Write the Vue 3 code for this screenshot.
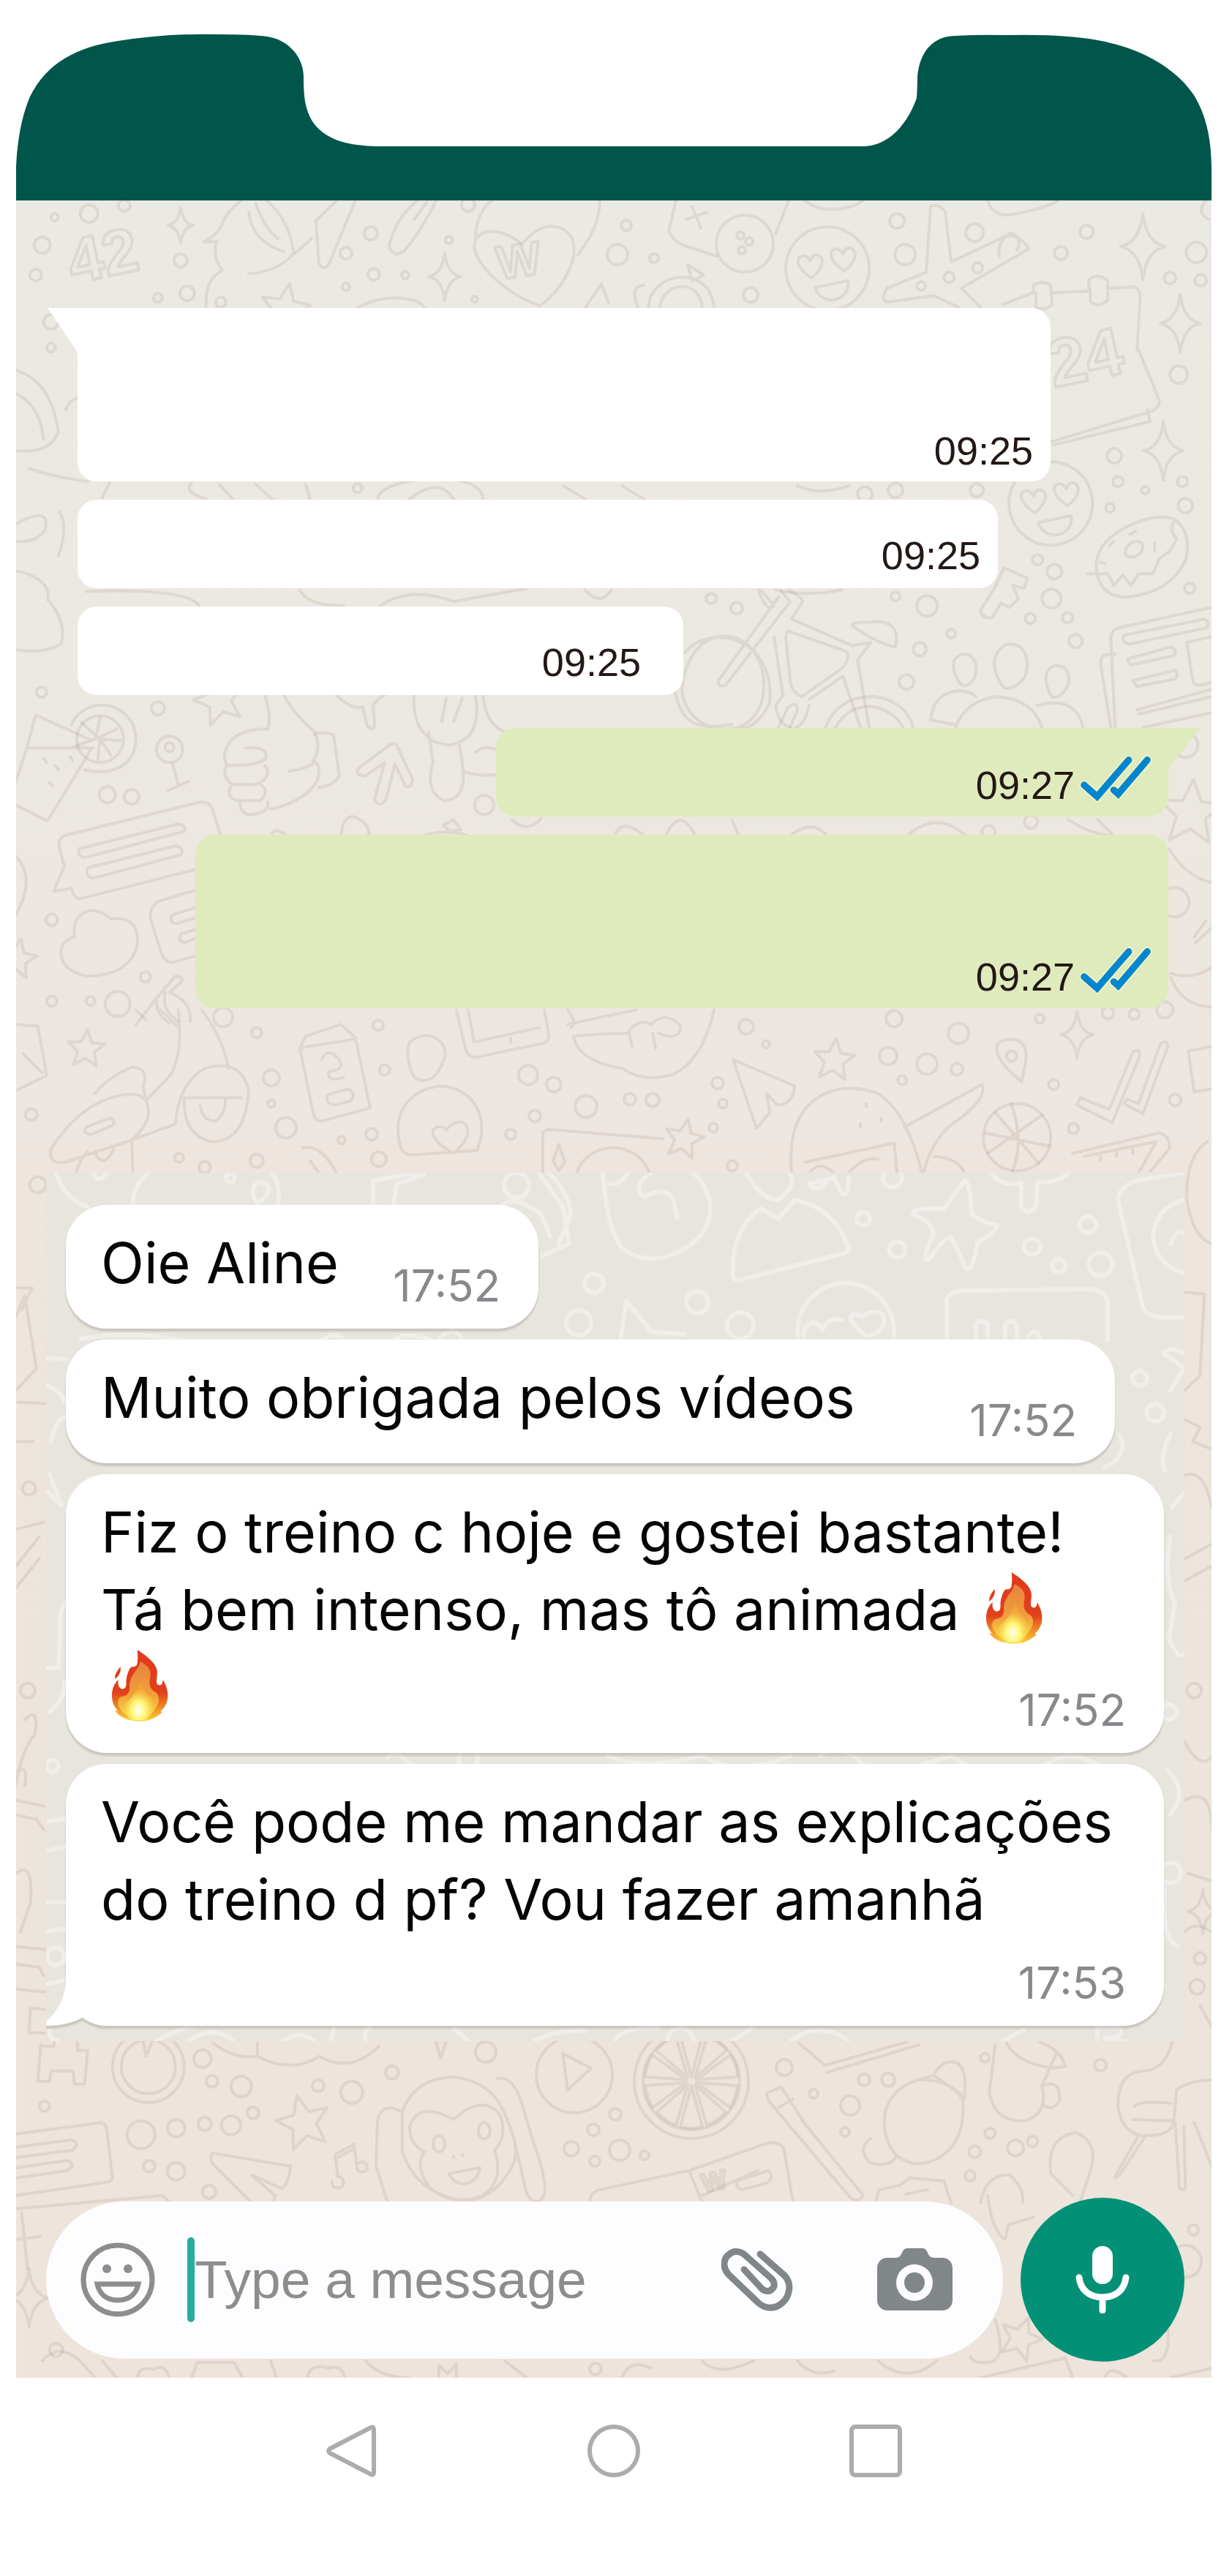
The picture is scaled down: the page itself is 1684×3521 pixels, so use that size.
<template>
  <main class="screen">
    <svg class="status-shape" viewBox="22 0 1634 274" aria-hidden="true">
      <path d="M22 274C20 222 24 172 41 132C64 86 105 64 161 56Q232 45 301 47Q345 47 365 50C395 54 415 79 415 105C415 129 416 151 430 170C446 190 472 199 516 200H1181C1216 199 1241 168 1253 134Q1254 120 1254 105C1256 78 1270 50 1305 49Q1340 47 1375 48Q1426 47 1461 50C1547 56 1604 89 1632 130C1650 160 1656 193 1656 232V274Z" />
    </svg>

    <section class="chat">
      <!-- wallpaper doodles -->
      <svg class="doodles" viewBox="22 274 1634 2975" preserveAspectRatio="xMidYMin slice" aria-hidden="true">
        <circle v-for="(c, i) in dots" :key="'c' + i" :cx="c[0]" :cy="c[1]" :r="c[2]" />
        <path v-for="(d, i) in doodles" :key="'d' + i" :d="d" />
        <path v-for="(s, i) in stars" :key="'s' + i" :d="starPath" :transform="`translate(${s[0]} ${s[1]}) rotate(${s[3]}) scale(${s[2]})`" vector-effect="non-scaling-stroke" />
        <path v-for="(s, i) in sparkles" :key="'p' + i" :d="sparklePath" :transform="`translate(${s[0]} ${s[1]}) scale(${s[2]})`" vector-effect="non-scaling-stroke" />
        <g v-for="(f, i) in faces" :key="'f' + i" :transform="`translate(${f[0]} ${f[1]}) rotate(-12)`">
          <circle r="57" />
          <path d="M-24 8C-42-10-40-24-30-24C-24-24-22-18-21-15C-18-20-14-24-8-20C0-12-8 0-24 8ZM22 8C4-10 6-24 16-24C22-24 24-18 25-15C28-20 32-24 38-20C46-12 38 0 22 8ZM-22 22H24C22 50-18 52-22 22Z" />
        </g>
        <text x="100" y="388" font-size="86" transform="rotate(-12 100 388)">42</text>
        <text x="1440" y="530" font-size="92" transform="rotate(-12 1440 530)">24</text>
        <text x="682" y="382" font-size="64" transform="rotate(-8 682 382)">W</text>
        <text x="962" y="2996" font-size="36" transform="rotate(-12 962 2996)">W</text>
      </svg>

      <ol class="thread">
        <li
          v-for="m in cleared"
          :key="m.id"
          :class="['blank', m.kind, { tall: m.tall, tail: m.tail, inset: m.inset }]"
          :style="{ width: m.width + 'px' }"
        >
          <time>{{ m.time }}</time>
          <svg v-if="m.kind === 'sent'" class="ticks" viewBox="536 160 280 186" role="img" aria-label="Read">
            <path class="halo" d="M550 282L602 328L728 182M668 302L686 318L802 182" />
            <path d="M550 282L602 328L728 182M668 302L686 318L802 182" />
          </svg>
        </li>
      </ol>

      <div class="recent">
        <svg class="doodles light" viewBox="63 1603 1556 1187" preserveAspectRatio="xMidYMin slice" aria-hidden="true">
          <circle v-for="(c, i) in lightDots" :key="'c' + i" :cx="c[0]" :cy="c[1]" :r="c[2]" />
          <path v-for="(d, i) in lightDoodles" :key="'d' + i" :d="d" />
        </svg>
        <ol class="bubbles">
          <li v-for="m in messages" :key="m.id" :class="['bubble', { last: m.last }]" :style="{ width: m.width + 'px' }">
            <p>
              <span v-for="(line, i) in m.lines" :key="i" class="line">{{ line.text }}
                <svg v-if="line.fire" class="fire" viewBox="52 58 236 300" role="img" aria-label="🔥">
                  <defs>
                    <linearGradient id="fire-outer" x1="0" y1="0" x2="0" y2="1">
                      <stop offset="0" stop-color="#e2391c" />
                      <stop offset="0.6" stop-color="#e0401c" />
                      <stop offset="0.85" stop-color="#f39a26" />
                      <stop offset="1" stop-color="#fbd53c" />
                    </linearGradient>
                    <linearGradient id="fire-middle" x1="0" y1="0" x2="0" y2="1">
                      <stop offset="0" stop-color="#e9803f" />
                      <stop offset="0.6" stop-color="#f0a23a" />
                      <stop offset="1" stop-color="#fbe24a" />
                    </linearGradient>
                    <radialGradient id="fire-core" cx="0.5" cy="0.75" r="0.55">
                      <stop offset="0" stop-color="#fffff0" />
                      <stop offset="0.45" stop-color="#fff679" />
                      <stop offset="1" stop-color="#f8cf3a" stop-opacity="0.2" />
                    </radialGradient>
                  </defs>
                  <path fill="url(#fire-outer)" d="M160 60C205 90 240 118 242 150C243 175 236 190 242 202C252 210 266 208 265 184C277 200 286 225 286 250C286 280 272 300 256 314L262 318C250 332 226 346 205 352Q170 358 138 352C110 348 82 334 68 310L82 314C64 298 54 272 55 246C56 220 65 198 82 184C78 202 84 220 98 222C116 220 114 206 114 188C116 164 126 136 136 130C148 132 160 128 160 112C163 94 162 76 160 60ZM91 130C92 152 84 170 67 180C68 160 76 144 91 130Z" />
                  <path fill="url(#fire-middle)" d="M172 108C208 126 220 146 212 178C208 206 212 222 236 236C252 246 254 276 236 300C220 330 190 346 166 346C128 344 92 322 82 290C76 268 84 254 100 252C124 248 130 232 128 206C128 176 148 154 160 138Q170 126 172 108Z" />
                  <path fill="url(#fire-core)" d="M178 190C184 226 206 240 222 262C232 290 224 330 196 350H140C108 334 96 306 110 280C138 264 156 228 178 190Z" />
                </svg>
              </span>
            </p>
            <time>{{ m.time }}</time>
            <svg v-if="m.last" class="bubble-tail" viewBox="0 0 60 69" aria-hidden="true">
              <path d="M27 0C27 30 17 48 0 63V69C20 69 36 65 49 58L60 0Z" />
            </svg>
          </li>
        </ol>
      </div>

      <form class="composer" @submit.prevent>
        <div class="field">
          <button type="button" class="emoji" aria-label="Emoji">
            <svg viewBox="0 0 102 102">
              <circle cx="51" cy="51" r="47" fill="none" stroke="#8e8d8d" stroke-width="7" />
              <circle cx="36" cy="36" r="6" fill="#8e8d8d" />
              <circle cx="65" cy="36" r="6" fill="#8e8d8d" />
              <path d="M23 57H79C76 71 66 79 51 79C36 79 26 71 23 57Z" fill="none" stroke="#8e8d8d" stroke-width="7" />
            </svg>
          </button>
          <span class="caret"></span>
          <input v-model="draft" type="text" placeholder="Type a message" aria-label="Type a message" />
          <button type="button" class="clip" aria-label="Attach">
            <svg viewBox="0 0 98 86">
              <path d="M53 8L86 37C98 49 92 67 84 74C74 84 60 83 51 75L10 36C1 26 3 14 10 9C17 2 27 4 33 10L68 41C74 47 73 53 69 56C65 60 59 59 55 55L31 29" fill="none" stroke="#818688" stroke-width="9" stroke-linecap="round" stroke-linejoin="round" />
            </svg>
          </button>
          <button type="button" class="camera" aria-label="Camera">
            <svg viewBox="0 0 103 86">
              <path fill="#818688" fill-rule="evenodd" d="M14 13H26C36 12 32 0 42 0H61C71 0 67 12 77 13H89C97 13 103 19 103 27V71C103 79 97 85 89 85H14C6 85 0 79 0 71V27C0 19 6 13 14 13ZM51 22A25 25 0 1 0 51 72A25 25 0 1 0 51 22ZM51 33A14 14 0 1 1 51 61A14 14 0 1 1 51 33Z" />
            </svg>
          </button>
        </div>
        <button type="button" class="mic" aria-label="Voice message">
          <svg viewBox="0 0 74 92">
            <rect x="23" y="0" width="28" height="52" rx="14" fill="#fff" />
            <path d="M5 43C7 60 19 70 37 70C55 70 67 60 69 43M37 70V88" fill="none" stroke="#fff" stroke-width="9" stroke-linecap="round" />
          </svg>
        </button>
      </form>
    </section>

    <nav class="system-nav">
      <button type="button" aria-label="Back">
        <svg viewBox="0 0 72 72"><path d="M62 4Q66 2 66 7V65Q66 70 62 68L6 39Q2 36 6 33Z" /></svg>
      </button>
      <button type="button" aria-label="Home">
        <svg viewBox="0 0 72 72"><circle cx="36" cy="36" r="33" /></svg>
      </button>
      <button type="button" aria-label="Recent apps">
        <svg viewBox="0 0 72 72"><rect x="3" y="3" width="66" height="66" rx="5" /></svg>
      </button>
    </nav>
  </main>
</template>

<script setup>
import { ref } from 'vue'

const draft = ref('')

const cleared = [
  { id: 1, kind: 'received', time: '09:25', width: 1330, tall: true, tail: true },
  { id: 2, kind: 'received', time: '09:25', width: 1258 },
  { id: 3, kind: 'received', time: '09:25', width: 828, inset: true },
  { id: 4, kind: 'sent', time: '09:27', width: 919, tail: true },
  { id: 5, kind: 'sent', time: '09:27', width: 1330, tall: true }
]

const messages = [
  { id: 6, time: '17:52', width: 646, lines: [{ text: 'Oie Aline' }] },
  { id: 7, time: '17:52', width: 1434, lines: [{ text: 'Muito obrigada pelos vídeos' }] },
  {
    id: 8,
    time: '17:52',
    width: 1501,
    lines: [
      { text: 'Fiz o treino c hoje e gostei bastante!' },
      { text: 'Tá bem intenso, mas tô animada', fire: true },
      { text: '', fire: true }
    ]
  },
  {
    id: 9,
    time: '17:53',
    width: 1501,
    last: true,
    lines: [{ text: 'Você pode me mandar as explicações' }, { text: 'do treino d pf? Vou fazer amanhã' }]
  }
]

const starPath = 'M0-50L14-17L48-15L22 8L30 44L0 25L-30 44L-22 8L-48-15L-14-17Z'
const sparklePath = 'M0-50Q5-6 34 0Q5 6 0 50Q-5 6-34 0Q-5-6 0-50Z'

// x, y, scale, rotation
const stars = [
  [390, 422, 0.7, 10], [300, 958, 0.7, 200], [118, 1433, 0.52, 4], [1140, 1448, 0.58, 6], [935, 1556, 0.55, 12],
  [1628, 1110, 0.9, 4], [415, 2900, 0.75, -14], [24, 1310, 0.55, 10], [1395, 3195, 0.6, 20]
]
const sparkles = [
  [247, 308, 0.5], [608, 378, 0.65], [1562, 337, 0.9], [1613, 442, 0.8], [1590, 616, 0.8], [1472, 1414, 0.65], [40, 3140, 0.8], [1644, 2612, 0.6]
]
const faces = [[1131, 367], [1436, 688]]

const dots = [
  [122, 292, 12], [170, 281, 8], [75, 297, 5], [58, 335, 11], [49, 376, 8], [507, 319, 9], [473, 346, 8], [511, 375, 8],
  [554, 376, 5], [614, 328, 5], [640, 280, 9], [247, 356, 9], [256, 401, 10], [216, 407, 6], [302, 413, 7], [473, 392, 5],
  [649, 409, 4], [856, 308, 7], [844, 348, 14], [894, 353, 6], [1018, 333, 39], [1012, 322, 5], [1024, 330, 5], [1014, 342, 5],
  [1026, 403, 10], [1226, 302, 10], [1332, 318, 12], [1237, 348, 14], [1297, 379, 7], [1336, 366, 7], [1485, 317, 9],
  [1450, 346, 9], [1635, 345, 14], [1599, 380, 8], [1641, 383, 8], [1259, 391, 6], [70, 475, 6], [70, 440, 10],
  [1611, 512, 12], [1523, 623, 10], [1565, 670, 5], [1528, 658, 7], [1616, 658, 7], [1335, 670, 9], [1224, 670, 10],
  [1182, 675, 10], [489, 667, 6], [57, 946, 7], [216, 968, 9], [232, 1024, 18], [232, 1021, 6], [147, 1086, 11],
  [180, 1089, 10], [662, 1100, 13], [71, 1257, 8], [71, 1368, 7], [124, 1368, 6], [161, 1372, 17], [199, 1335, 7],
  [305, 1390, 13], [972, 818, 7], [1007, 831, 8], [1267, 828, 14], [1224, 815, 6], [1300, 866, 6], [1257, 887, 9],
  [1239, 932, 10], [1418, 765, 7], [1441, 781, 10], [1437, 818, 13], [1408, 845, 7], [1459, 844, 7], [1470, 876, 9],
  [1626, 804, 7], [1620, 691, 10], [1517, 694, 6], [1605, 1233, 20], [1592, 1380, 11], [1550, 1386, 7], [1514, 1384, 8],
  [1620, 1018, 17], [1409, 1123, 9], [1351, 1137, 9], [351, 1411, 7], [517, 1401, 7], [526, 1462, 7],
  [371, 1473, 11], [371, 1508, 5], [391, 1541, 14], [467, 1558, 5], [508, 1550, 8], [518, 1584, 10], [351, 1586, 9],
  [245, 1582, 6], [280, 1595, 8], [43, 1523, 8], [722, 1469, 13], [757, 1482, 10], [801, 1512, 15], [861, 1502, 8],
  [892, 1503, 9], [731, 1525, 8], [698, 1550, 7], [981, 1480, 8], [988, 1508, 6], [975, 1541, 6], [1020, 1403, 10],
  [1047, 1427, 5], [1214, 1443, 12], [1267, 1454, 14], [1308, 1461, 8], [1233, 1476, 6], [1222, 1392, 11], [1310, 1412, 14],
  [1421, 1392, 6], [1440, 1482, 7], [1467, 1542, 7], [1606, 1503, 8], [1001, 1593, 7], [52, 1619, 11], [1390, 1554, 46],
  [277, 2813, 12], [290, 2844, 8], [330, 2851, 14], [435, 2850, 8], [481, 2859, 15], [536, 2832, 9], [664, 2804, 14],
  [61, 2878, 7], [193, 2917, 19], [241, 2908, 12], [280, 2902, 9], [316, 2904, 13], [346, 2887, 8], [204, 2960, 8],
  [241, 2967, 12], [286, 2995, 9], [841, 2889, 8], [811, 2910, 8], [781, 2936, 10], [847, 2938, 14], [813, 2953, 7],
  [881, 2945, 6], [1072, 2825, 11], [1162, 2877, 13], [1181, 2842, 8], [1214, 2842, 9], [1112, 2861, 6], [1155, 2913, 6],
  [1346, 2812, 6], [1504, 2822, 8], [1353, 2915, 7], [1332, 2940, 8], [1388, 2935, 11], [1411, 2926, 7], [1326, 2973, 7],
  [1631, 3047, 7], [77, 3211, 9], [814, 3237, 8], [945, 2844, 78], [945, 2844, 66], [785, 2835, 52], [203, 2824, 49],
  [203, 2824, 37], [137, 1010, 32], [1620, 3090, 22], [40, 2034, 9], [38, 2310, 10], [1632, 2310, 10], [1636, 2715, 10], [1640, 2676, 8]
]

const doodles = [
  // parrot, paper planes, hearts along the top
  'M282 420Q280 380 304 370Q290 350 296 330Q276 332 280 330Q302 318 306 300Q318 282 330 274M365 274Q395 300 402 346Q380 372 340 374M340 290Q345 330 388 344M350 278Q360 310 380 326',
  'M460 274L432 302L436 360Q444 372 450 360L486 274M404 346L426 326M570 274Q540 300 532 336Q536 352 552 344Q580 310 596 274M566 300L584 276M576 310L592 284',
  'M738 418C680 396 640 350 650 328C662 308 692 316 714 334C732 306 768 300 782 326C794 356 764 400 738 418ZM650 328Q650 292 672 274M820 274Q820 310 790 348',
  'M924 274L914 316Q920 330 936 336L980 350M1078 274L1060 320M1100 274C1120 292 1160 288 1180 274M1350 274Q1358 300 1390 292Q1430 284 1446 274M938 300L966 290M946 282L958 312',
  'M1266 372L1272 282Q1284 278 1292 290L1300 358L1376 322Q1396 322 1406 340L1314 394L1340 420M1266 372L1212 394Q1200 416 1220 412L1276 404L1310 420M1366 350Q1362 330 1382 318Q1398 324 1390 342',
  'M1370 416L1412 400L1412 390Q1424 382 1436 390L1438 416Q1428 426 1416 420V400M1438 400L1488 398V382Q1502 372 1514 384V410Q1502 422 1490 412V394M1514 394L1550 392Q1560 396 1558 410L1554 478M1556 478L1584 546Q1586 556 1574 562L1436 604M1568 560L1572 576L1440 608',
  'M800 420L822 388L832 414M872 420Q860 390 880 390M886 420C890 370 970 360 976 420M902 420C906 384 956 380 960 420M940 362L962 376L946 384ZM490 420Q520 404 550 408Q574 410 580 420M1648 274Q1634 290 1652 300',
  // left edge between bubbles
  'M22 506Q70 520 80 590Q70 620 22 616M22 538Q54 552 60 600M40 640Q66 650 120 658M22 716Q70 690 62 724Q50 742 22 740M22 780Q70 790 66 820Q92 850 84 880Q60 894 22 888M90 560Q96 546 106 544M82 700Q94 720 80 760',
  'M150 660L140 680M262 660Q250 672 282 682M300 662L318 682M350 662L372 682M418 662L424 682M516 682C520 650 660 640 660 682M560 682Q600 650 620 682M770 664L800 682M850 664L880 682M1090 664Q1120 678 1160 664',
  'M118 808Q260 804 272 828M410 806Q420 828 470 828M520 828Q560 800 620 822L720 804M800 806Q820 830 836 806M1060 806Q1100 816 1150 806',
  // cocktail, thumb up and arrow
  'M49 977L124 1011L98 1022H37ZM37 1022L22 1068M98 1022L130 1010M126 1022L65 1122L22 1100M98 1022H128M137 980L131 1010L160 996M137 1010L165 1012M137 1010L152 1032M137 1010L134 1038M137 1010L112 988',
  'M98 990C110 960 160 950 182 990C196 1030 170 1064 116 1052M236 1044L244 1072M230 1080L258 1068M60 1036L64 1042M76 1046L80 1052M96 1034L100 1040M68 1070L72 1074',
  'M362 950Q372 980 366 996Q330 996 316 1012Q302 1030 310 1046Q366 1046 364 1032Q364 1020 336 1022M310 1046Q302 1062 318 1072H350Q374 1062 362 1046M318 1072Q306 1088 324 1094H356Q370 1080 356 1072M328 1094Q328 1118 350 1112Q370 1108 366 1096M370 1106Q420 1094 434 1066Q440 1044 428 1040Q440 1022 430 1000Q400 974 388 950M396 1054Q420 1050 430 1042',
  'M430 1004Q436 998 456 1004L464 1060Q456 1074 436 1076M490 1050Q484 1060 500 1060L526 1042L512 1092Q518 1106 528 1092L540 1044L554 1074Q564 1078 564 1064L542 1018Q536 1014 530 1020Z',
  'M460 950Q480 970 496 966L502 992Q512 1002 512 988L510 964Q518 952 526 950M566 950Q564 990 584 1006Q590 1016 616 1018Q660 1010 650 950M586 1000L592 1042Q580 1080 606 1094Q640 1094 632 1042L628 1018M604 986L610 954M620 986L632 954M660 950Q664 990 690 1000M632 1054Q660 1062 678 1058M650 1028Q660 1018 678 1024',
  // speech bubbles and cloud
  'M88 1142L274 1096Q286 1096 290 1104L302 1142M88 1142Q78 1148 82 1160L88 1184L74 1218L98 1214Q102 1230 110 1228L268 1188M108 1160L244 1126Q256 1128 252 1136L116 1172Q106 1170 108 1160ZM120 1186L240 1156Q252 1158 248 1168L128 1200Q116 1198 120 1186Z',
  'M268 1216L216 1232Q204 1240 206 1256L222 1306Q230 1318 240 1314L268 1306M268 1240L236 1250Q230 1262 242 1262L268 1254M268 1270L248 1276Q242 1286 252 1288L268 1282',
  'M102 1280Q98 1250 124 1244Q140 1244 152 1256Q190 1250 188 1290Q180 1332 120 1334Q80 1326 84 1296Q88 1284 102 1280ZM22 1170Q50 1200 22 1250M370 1142Q376 1128 392 1142M466 1142Q470 1106 492 1120Q506 1128 504 1142M606 1128L620 1120L630 1134L616 1136ZM580 1142Q610 1132 640 1142',
  'M186 1400L214 1364L240 1334Q252 1334 248 1342L232 1356Q264 1370 260 1396M214 1364Q212 1386 232 1398M226 1356Q220 1380 244 1396',
  // doughnut and key
  'M1498 772Q1500 740 1540 720Q1580 700 1606 710Q1630 730 1620 766Q1600 810 1540 816Q1500 816 1498 772ZM1606 710Q1596 724 1608 736L1600 752L1584 764L1576 784H1556L1546 800L1534 786L1522 800L1514 784L1486 784M1538 758C1536 740 1560 734 1562 746C1562 758 1546 766 1538 758ZM1516 746L1522 740M1544 730L1552 726M1578 742V752M1504 768L1510 770',
  'M1372 776L1404 790L1400 804L1384 800L1392 818L1380 830L1368 824L1356 844Q1342 846 1340 834L1360 802Z',
  // bicycle
  'M932 944C940 840 1046 850 1044 940C1040 1020 940 1010 932 944ZM922 940C930 996 960 996 1000 990M936 892C970 850 1060 870 1052 960Q1034 1000 1000 996M992 936L1080 822L1068 808M982 930L1064 816M992 936Q980 940 982 930M1040 806L1058 828Q1048 838 1036 806M1078 806Q1102 820 1096 824L1082 846L1164 882L1190 878M1076 862L1156 890Q1164 898 1150 914L1096 952Q1082 946 1080 930L1074 870ZM1058 870L1070 950L1060 964Q1064 990 1080 994M1106 964Q1100 990 1088 994M1106 956L1152 924L1176 994M1190 878L1172 902L1188 994M1166 856Q1160 850 1190 850Q1232 846 1224 884Q1200 880 1166 856Z',
  'M1128 994Q1146 950 1196 952Q1240 960 1248 994M1142 994Q1160 962 1196 966Q1224 974 1234 994M1064 994L1076 968Q1088 956 1090 970L1080 994',
  // group of people
  'M1318 894C1330 894 1338 906 1332 926Q1324 940 1314 936Q1300 920 1304 902Q1310 894 1318 894ZM1382 880C1404 882 1408 908 1400 926Q1386 944 1372 940Q1356 920 1360 898Q1368 880 1382 880ZM1448 910Q1464 914 1460 936Q1446 960 1436 950Q1424 926 1434 914Q1440 908 1448 910ZM1306 994Q1320 956 1364 952Q1412 956 1424 994M1304 990L1272 984Q1276 946 1310 944Q1326 944 1334 952M1418 964Q1470 950 1480 994',
  // newspaper
  'M1524 994L1518 870Q1520 860 1528 858L1656 830M1524 894Q1504 892 1504 906L1518 994M1536 868L1646 846Q1656 852 1648 858L1544 880Q1532 878 1536 868ZM1542 900L1600 884Q1610 888 1604 896L1548 908Q1540 908 1542 900ZM1548 930L1606 916Q1612 922 1606 928L1554 938ZM1622 878L1656 870M1622 878L1630 930Q1632 938 1642 936L1656 932M1554 970L1656 942M1556 976L1656 952M1562 994L1656 974',
  'M700 1120Q720 1140 740 1118M840 1142Q850 1116 880 1142M910 1142Q930 1100 950 1142M1000 1120L1010 1142M1080 1142Q1110 1118 1130 1142M1240 1142Q1280 1106 1320 1142M1460 1120Q1490 1140 1520 1142M1500 1120L1520 1140M1598 1160Q1620 1198 1656 1206M1632 1280L1648 1258M1634 1288L1656 1268M1600 1330Q1630 1340 1656 1322M1600 1336Q1616 1376 1656 1376',
  // scooter, milk, phone and lips band
  'M244 1380Q250 1440 234 1468L200 1504Q190 1490 160 1498Q108 1510 70 1570Q66 1592 90 1588L180 1558L240 1536Q244 1480 280 1460Q330 1446 340 1490Q336 1560 290 1560Q250 1552 252 1500L330 1500M276 1380Q306 1420 312 1460M130 1494Q150 1470 182 1458Q204 1460 196 1484L200 1504Q212 1530 180 1558L182 1603M274 1510Q276 1532 294 1532Q310 1522 308 1500M118 1540L150 1528Q160 1530 154 1538L126 1550Q112 1550 118 1540ZM104 1603Q112 1580 120 1574M130 1574Q140 1600 156 1570M186 1380L200 1394M220 1380L246 1406',
  'M410 1432L418 1416L466 1400L486 1418L506 1514L440 1532Q430 1532 428 1520ZM410 1432L484 1420M440 1448Q448 1430 462 1446Q474 1462 450 1464Q446 1480 470 1472M448 1496L476 1488Q488 1494 480 1504L458 1510Q444 1508 448 1496ZM560 1424C590 1400 618 1430 606 1450C594 1484 570 1480 564 1468C556 1450 556 1436 560 1424Z',
  'M624 1380L636 1432Q640 1448 654 1444L740 1426Q752 1424 750 1412L744 1380M640 1380L648 1424L738 1404M698 1418V1424M776 1400Q820 1390 870 1380M784 1416Q820 1412 858 1412Q872 1390 890 1400Q910 1380 930 1402Q930 1424 900 1412M784 1416Q790 1450 850 1460Q880 1480 920 1468Q960 1450 976 1380M860 1412L864 1430M892 1412L896 1432M776 1380Q790 1400 780 1404',
  'M1002 1448L1086 1484Q1084 1510 1062 1510L1048 1494L1052 1520L1034 1542ZM548 1568C534 1520 560 1490 600 1484C650 1486 670 1530 652 1572L564 1578Q552 1578 548 1568ZM620 1576C590 1560 586 1544 598 1540Q606 1538 610 1544Q620 1530 634 1534Q650 1550 620 1576ZM742 1603V1548Q744 1542 758 1544L906 1556M764 1564L772 1588L764 1600L756 1586ZM788 1603Q800 1570 840 1568Q876 1572 888 1603M414 1568Q440 1564 460 1603M424 1586L436 1603',
  'M1082 1603Q1074 1520 1128 1494Q1160 1480 1200 1494Q1240 1520 1260 1603M1236 1540L1342 1482Q1350 1500 1310 1530Q1276 1550 1262 1603M1100 1588L1222 1562L1226 1603M1106 1603Q1120 1584 1140 1603M1160 1603Q1180 1580 1200 1584M1276 1580Q1310 1582 1318 1603M1184 1508V1512M1204 1528V1532M1176 1536V1540M1360 1520L1420 1590M1350 1576L1424 1524M1382 1508Q1400 1560 1384 1600M1346 1548L1434 1566',
  'M1380 1420C1410 1420 1404 1450 1396 1478C1376 1462 1356 1440 1364 1426Q1370 1420 1380 1420ZM1382 1436A7 7 0 1 0 1383 1436ZM1476 1500L1516 1516L1548 1438Q1556 1430 1558 1442L1520 1534L1472 1510ZM1540 1502L1556 1508L1586 1426Q1596 1420 1596 1430L1562 1522L1536 1508ZM1466 1576L1584 1548Q1600 1552 1598 1570L1570 1603M1482 1580L1580 1560L1556 1603M1504 1580V1586M1526 1574V1580M1548 1570V1576M1656 1430L1624 1436L1632 1492L1656 1488M1650 1560Q1620 1580 1622 1640Q1630 1690 1656 1700',
  // side strips
  'M22 1400L52 1402L64 1470L22 1490M32 1440L58 1466M22 1760H44L30 1790M22 1800L34 1770L50 1870L22 1900M24 1916L62 1918M22 1970H46M22 2090L60 2080M22 2140L54 2100M22 2170L54 2130M34 2350Q54 2330 48 2370Q30 2390 22 2440M22 2420Q40 2410 34 2440M22 2460L60 2468M22 2480L50 2486L60 2500M22 2660L62 2664M22 2684L54 2688L60 2700M22 2718L62 2722M62 2746L42 2744L40 2778H62M22 2560Q46 2540 42 2600L28 2640',
  'M1619 1766L1646 1768L1640 1880L1619 1900M1619 1940L1640 1950L1630 1970L1656 1980M1619 2016Q1646 2006 1656 2060M1619 2130L1656 2110M1619 2160L1656 2140M1619 2380Q1640 2420 1656 2400M1619 2460Q1656 2440 1656 2500M1624 2560L1656 2570M1619 2640Q1634 2624 1656 2640M1640 2740L1656 2770',
  // bottom band
  'M56 2794L52 2844H68L70 2830H100L102 2848H116L120 2802H106V2790M56 2796H74V2790M196 2790L200 2810L208 2790M292 2792Q320 2814 352 2810Q400 2834 436 2810Q480 2834 518 2796M352 2810V2792M596 2790L602 2812L610 2790',
  'M769 2806L808 2826L776 2856ZM1092 2792L1128 2822L1240 2790M1130 2832L1256 2794',
  // orange slice
  'M945 2838L930 2782Q945 2778 960 2782ZM950 2839L966 2784Q984 2790 993 2802ZM952 2842L998 2808Q1008 2822 1008 2838ZM952 2846L1008 2850Q1006 2866 998 2880ZM950 2849L992 2886Q982 2898 966 2904ZM945 2850L960 2906Q945 2910 930 2906ZM940 2849L924 2904Q908 2898 898 2886ZM938 2846L892 2880Q884 2866 882 2850ZM938 2842L882 2838Q882 2822 892 2808ZM940 2839L897 2802Q906 2790 924 2784Z',
  'M22 2916L134 2901Q144 2900 146 2908L154 2976Q152 2982 144 2982L22 3000M22 2934L98 2924Q110 2928 100 2938L22 2948M22 2962L92 2952Q106 2958 92 2966L22 2976M22 3018L222 3000L234 3010M22 3060L56 3056M30 3024L38 3100M290 2942L398 2960Q392 2990 384 2990L344 2972L376 3000L374 3010M290 2942Q286 2952 294 2960L344 3010',
  'M454 2980A8 8 0 1 0 462 2974L458 2944L484 2930L488 2962A7 7 0 1 0 490 2956M458 2950L484 2936',
  // monkey
  'M550 2886Q566 2840 620 2838Q670 2844 688 2884Q714 2940 700 2960Q680 3000 640 3008Q570 3000 550 2940ZM560 2906Q572 2870 620 2896Q660 2860 684 2890Q694 2920 676 2938Q690 2980 660 3000Q620 3016 588 2990Q566 2960 580 2940Q560 2930 560 2906ZM592 2930A8 11 0 1 0 592 2929M654 2912A8 11 0 1 0 654 2911M614 2970L656 2962Q652 2984 632 2984Q618 2982 614 2970ZM550 2886Q520 2870 516 2900L514 2960L530 3010M680 2840Q700 2836 712 2870L730 2930Q756 3000 736 3008Q720 3010 716 2980L702 2920M620 2946V2948M632 2944V2946',
  'M806 3010Q806 2996 820 2992L942 2966L960 3010M942 2966L1050 2928Q1070 2926 1072 2940L1084 3010M960 3000L1036 2966M1008 2980L1050 2966Q1060 2976 1046 2984L1014 2992Q1004 2990 1008 2980ZM1048 2860L1068 2852L1100 2902L1180 3000Q1170 3014 1158 2998L1050 2870ZM1064 2880L1084 2868',
  // teapot, pear, chair
  'M1210 2884Q1222 2850 1256 2842Q1300 2840 1316 2870Q1320 2930 1280 2950Q1250 2966 1224 2944Q1204 2920 1210 2884ZM1256 2842L1276 2836L1314 2862M1276 2836Q1290 2810 1310 2820Q1322 2830 1318 2868M1190 2922Q1170 2936 1190 2956Q1216 2962 1226 2946M1360 2794L1352 2860Q1360 2900 1400 2898Q1434 2888 1424 2850Q1450 2840 1448 2870Q1440 2886 1424 2876M1376 2792Q1390 2820 1440 2826L1456 2824Q1450 2800 1420 2790M1424 2850L1444 2806',
  'M1604 2780Q1596 2830 1560 2830Q1526 2834 1528 2880Q1534 2914 1560 2918Q1600 2920 1604 2900M1604 2900L1608 2856Q1620 2844 1656 2842M1548 2896L1602 2898M1550 2878Q1560 2870 1600 2874M1556 2918L1526 2970Q1520 2980 1530 2972L1566 2918M1606 2900L1612 2990Q1620 2996 1620 2984L1618 2906M1632 2900L1656 2960',
  'M1196 3010L1202 2992L1230 2986L1244 2976L1290 2980L1300 3010M1238 2998L1268 2992M1340 3010Q1348 2970 1380 2972Q1400 2990 1398 3010M1436 2970Q1430 2920 1470 2914Q1500 2926 1492 2960L1476 3010M1436 2970L1466 3000M1350 3000Q1356 3050 1374 3060L1378 3040L1412 3030',
  'M58 3226Q80 3200 110 3226L130 3249M140 3226L160 3249M188 3249Q190 3232 210 3238Q224 3228 232 3249M262 3249L270 3228H320L332 3249M370 3226L378 3249M420 3249Q424 3228 450 3236Q466 3230 472 3249M500 3226Q520 3249 560 3249M600 3249V3232L612 3244L624 3230V3249M690 3226L720 3249M850 3249Q860 3222 890 3236M960 3226Q980 3249 1030 3226M1090 3226Q1110 3249 1140 3240M1200 3226Q1240 3260 1280 3226M1340 3249L1456 3222L1466 3249M1360 3170Q1378 3226 1350 3228Q1330 3230 1326 3220M1576 3226Q1600 3230 1596 3180M1510 3249Q1516 3230 1540 3249M1600 3249L1656 3236'
]

const lightDots = [
  [706, 1620, 17], [1220, 1610, 13], [1180, 1666, 9], [1487, 1674, 11], [1411, 1704, 11], [1226, 1708, 11], [1447, 1730, 9],
  [1504, 1728, 16], [812, 1754, 13], [953, 1780, 15], [791, 1808, 17], [1012, 1812, 18], [1156, 1820, 66], [1558, 1884, 10],
  [1579, 1931, 12], [315, 1610, 6], [72, 2414, 8], [640, 2404, 13], [76, 2674, 12], [1598, 2340, 10], [1600, 2560, 14], [930, 2790, 18]
]

const lightDoodles = [
  'M76 1603Q90 1640 120 1650M182 1650Q180 1620 204 1603M128 1603Q132 1620 146 1603M350 1618Q340 1630 352 1644Q374 1630 364 1618Q356 1614 350 1618ZM372 1603Q384 1620 380 1647M510 1647V1614L570 1603M538 1647L542 1618L580 1606M736 1603L770 1650L778 1700L742 1716M750 1603Q778 1630 780 1660L764 1700M684 1650Q700 1630 740 1660L752 1690M824 1603Q830 1680 850 1706Q890 1736 940 1704Q976 1680 970 1640Q960 1610 946 1603M832 1618Q850 1620 858 1603M890 1603Q862 1622 880 1636Q910 1620 920 1640L926 1664',
  'M1020 1603Q1040 1640 1064 1640Q1090 1620 1080 1603M1106 1618L1140 1610L1150 1630Q1160 1640 1160 1610M1106 1618Q1116 1632 1130 1616M1086 1640Q1140 1650 1160 1706Q1160 1712 1150 1714L1010 1750Q1000 1750 1002 1738Q1000 1680 1040 1652L1064 1666Z',
  'M1318 1614Q1326 1612 1328 1660Q1350 1674 1362 1674Q1364 1684 1336 1698Q1330 1740 1320 1734Q1306 1700 1300 1692Q1290 1690 1270 1722Q1258 1726 1276 1686Q1274 1670 1248 1660Q1244 1650 1290 1652Q1300 1640 1318 1614ZM1354 1603Q1370 1624 1396 1616V1650Q1406 1662 1416 1650L1418 1616Q1450 1616 1460 1603',
  'M1619 1603L1552 1614Q1530 1622 1528 1640L1562 1786Q1570 1806 1619 1800M1619 1640Q1580 1650 1576 1690Q1580 1730 1619 1740M1600 1700Q1610 1676 1619 1686M1294 1832V1776Q1298 1764 1320 1764L1490 1762Q1512 1764 1514 1780V1832M1334 1830V1810Q1342 1802 1350 1810V1830M1374 1830V1810Q1382 1802 1390 1810V1830M1404 1830Q1414 1810 1422 1830M1100 1832Q1094 1814 1110 1808Q1120 1808 1124 1818Q1132 1800 1150 1804M1184 1826C1150 1800 1164 1790 1178 1800C1200 1784 1216 1800 1206 1814Q1200 1824 1184 1826ZM848 1832L856 1778L890 1820L936 1824',
  'M110 1830Q180 1818 250 1832M440 1832Q460 1818 470 1832M540 1830Q560 1820 590 1832M600 1832Q620 1806 632 1832M63 1856L90 1858M64 1894Q84 1900 90 1920M70 1970Q76 1940 90 1936M1590 1850L1619 1870L1600 1900M1619 1850Q1600 1840 1592 1848M1530 1960Q1544 1990 1510 2006M1600 1960Q1584 1990 1592 2010',
  'M68 2015L84 2058L66 2040M63 2280H80L82 2230Q80 2200 90 2190M68 2340Q90 2320 88 2300M1600 2100Q1590 2160 1606 2190L1598 2240Q1610 2270 1619 2260M1602 2060L1619 2040M530 2402Q540 2390 560 2410M830 2400Q880 2420 960 2400Q1010 2430 1080 2400M1120 2400Q1150 2380 1180 2412M1260 2412L1300 2400L1320 2412M1430 2412Q1460 2390 1500 2412M1596 2420Q1626 2450 1600 2480',
  'M63 2490L90 2486M63 2530L90 2524M63 2600H90M63 2640L90 2636M1592 2580Q1586 2650 1610 2660M63 2712L90 2706M68 2776Q68 2790 80 2790M214 2790Q240 2774 262 2770M258 2790Q290 2766 320 2790M386 2790Q410 2774 430 2790M452 2790L456 2772M500 2790Q496 2776 506 2770M620 2772L640 2790M730 2790Q760 2774 800 2776M840 2790Q850 2770 900 2772M1000 2790L1030 2770M1080 2790Q1120 2760 1160 2790M1370 2790L1400 2774M1500 2790V2770L1530 2772Q1540 2784 1510 2786L1536 2790'
]
</script>

<style>
body {
  margin: 0;
  background: #fff;
}
</style>

<style scoped>
.screen {
  padding: 0 28px 0 22px;
  font-family: "Liberation Sans", Arial, sans-serif;
  background: #fff;
}
.status-shape { display: block; width: 100%; fill: #00564b; }

.chat {
  position: relative;
  background: linear-gradient(#ebe9e3 0%, #ece7e1 30%, #eee5df 45%, #ede4db 70%, #ede4db 100%);
}
.doodles {
  position: absolute; inset: 0; width: 100%; height: 100%;
  fill: none; stroke: rgba(125, 110, 98, 0.13); stroke-width: 4;
  stroke-linecap: round; stroke-linejoin: round;
}
.doodles text { font-family: "Liberation Sans", Arial, sans-serif; font-weight: 700; }
.doodles.light { stroke: rgba(255, 255, 255, 0.36); stroke-width: 6; }

ol { list-style: none; margin: 0; padding: 0; }
button { border: 0; padding: 0; background: none; cursor: pointer; }
button svg { display: block; width: 100%; }

.thread {
  position: relative; display: flex; flex-direction: column; gap: 25px;
  padding: 147px 59px 225px 84px;
}
.blank {
  position: relative; display: flex; align-items: flex-end; justify-content: flex-end; gap: 8px;
  box-sizing: border-box; height: 121px; max-width: 100%; padding: 0 24px 18px; border-radius: 26px;
  font-size: 54px; line-height: 54px; color: #231815; background: #fff;
}
.blank.tall { height: 237px; padding-bottom: 15px; }
.blank.inset { padding-right: 58px; }
.blank.sent { align-self: flex-end; padding-bottom: 16px; background: #dfebbd; }
.blank.inset + .sent { margin-top: 20px; }
.blank.tail::before {
  content: ""; position: absolute; top: 0; left: -41px; width: 42px; height: 62px;
  background: inherit; clip-path: polygon(0 0, 100% 0, 100% 100%);
}
.blank.received.tail { border-top-left-radius: 0; }
.blank.sent.tail { border-top-right-radius: 0; }
.blank.sent.tail::before { left: auto; right: -43px; width: 44px; height: 58px; clip-path: polygon(0 0, 100% 0, 0 100%); }
.ticks {
  width: 96px; height: 64px; margin-bottom: 5px; overflow: visible;
  fill: none; stroke: #0086d1; stroke-width: 27; stroke-linecap: round;
}
.ticks .halo { stroke: #f4f3bd; stroke-width: 38; }

.recent { position: relative; margin: 0 37px 0 41px; padding: 44px 28px 21px 27px; background: #e7e5de; }
.bubbles { position: relative; display: flex; flex-direction: column; gap: 15px; }
.bubble {
  position: relative; display: grid;
  box-sizing: border-box; max-width: 100%; padding: 26px 52px 37px 48px; border-radius: 56px;
  font-family: Inter, sans-serif; background: #fff; filter: drop-shadow(0 4px 1px rgba(80, 75, 65, 0.2));
}
/* text and time share one cell, the time sits in its corner */
.bubble p, .bubble time { grid-area: 1 / 1; }
.bubble p { margin: 0; font-size: 77px; line-height: 106px; color: #050505; }
.bubble .line { display: block; height: 106px; white-space: nowrap; }
.bubble time { align-self: end; justify-self: end; margin-bottom: -6px; font-size: 60px; line-height: 56px; color: #89898d; }
/* the time wraps under the last message */
.bubble.last { row-gap: 33px; }
.bubble.last time { grid-area: 2 / 1; }
.bubble-tail {
  position: absolute; left: -27px; bottom: 0; width: 60px; height: 69px; fill: #fff;
}
.fire { width: 78px; height: 100px; margin: 0 14px; vertical-align: -20px; }

.composer { position: relative; display: flex; align-items: center; gap: 24px; padding: 214px 37px 22px 41px; }
.field {
  flex: 1; display: flex; align-items: center; min-width: 0; height: 215px; box-sizing: border-box;
  padding: 0 69px 0 47px; border-radius: 108px; background: #fdfdff;
}
.emoji { flex: none; width: 102px; }
.caret { flex: none; width: 10px; height: 116px; margin-left: 44px; border-radius: 5px; background: #28aca0; }
.field input {
  flex: 1; min-width: 0; height: 116px; padding: 0; border: 0; outline: 0; background: none;
  font: 73px/116px "Liberation Sans", Arial, sans-serif; color: #231815;
}
.field input::placeholder { color: #8e8d8d; opacity: 1; }
.clip { flex: none; width: 98px; margin-right: 115px; }
.camera { flex: none; width: 103px; }
.mic {
  flex: none; display: grid; place-items: center; width: 224px; height: 224px;
  border-radius: 50%; background: #029176;
}
.mic svg { width: 74px; }

.system-nav { display: flex; justify-content: center; gap: 286px; padding: 64px 0 136px; }
.system-nav button { width: 72px; }
.system-nav svg { fill: none; stroke: #acacac; stroke-width: 6; stroke-linejoin: round; }
</style>
